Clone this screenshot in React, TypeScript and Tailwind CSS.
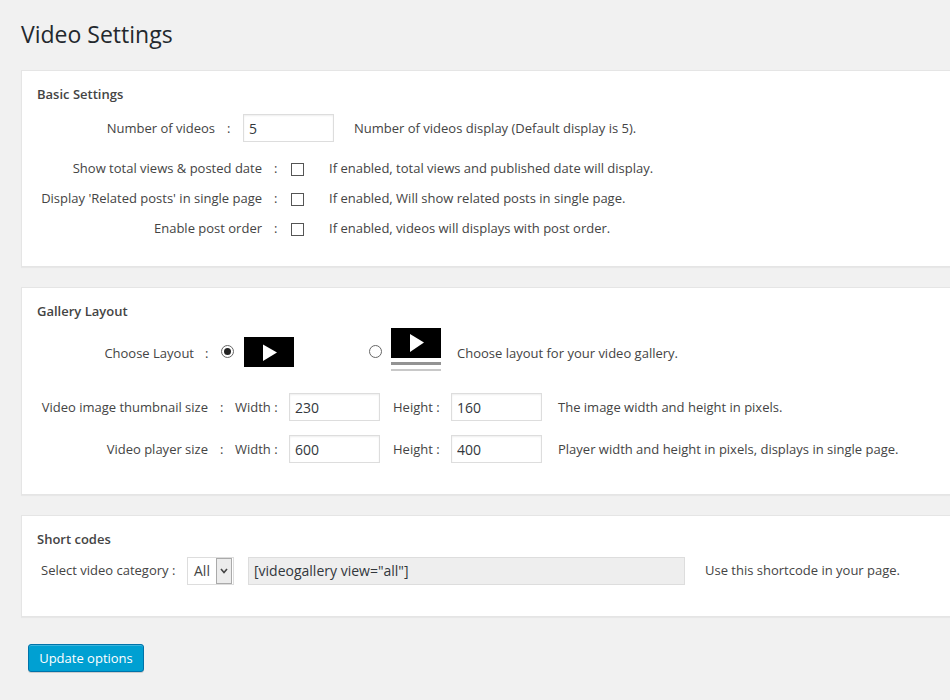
const inputCls =
  "h-[28px] w-[91px] border border-[#ddd] bg-white px-[5px] text-[14px] text-[#32373c] shadow-[inset_0_1px_2px_rgba(0,0,0,0.07)] outline-none";

function Check() {
  return <span className="mt-[2px] block h-[13px] w-[13px] border border-[#555] bg-white shrink-0" />;
}

function CheckRow({ label, desc }: { label: string; desc: string }) {
  return (
    <div className="flex h-[30px] items-center">
      <span className="w-[225px] text-right">{label}</span>
      <span className="ml-[12px] w-[16px]">:</span>
      <span className="ml-[1px]"><Check /></span>
      <span className="ml-[25px] whitespace-nowrap">{desc}</span>
    </div>
  );
}

function Thumb({ lines }: { lines?: boolean }) {
  return (
    <svg width="50" height={lines ? 44 : 30} viewBox={lines ? "0 0 50 44" : "0 0 50 30"} className="block">
      {lines ? (
        <>
          <rect width="50" height="30" fill="#000" />
          <path d="M19 6 L33 14.5 L19 24 Z" fill="#fff" />
          <rect y="34" width="50" height="3" fill="#939393" />
          <rect y="41" width="50" height="2" fill="#c8c8c8" />
        </>
      ) : (
        <>
          <rect width="50" height="30" fill="#000" />
          <path d="M19 7.5 L33 15.5 L19 24 Z" fill="#fff" />
        </>
      )}
    </svg>
  );
}

function SizeRow({ label, w, h, desc }: { label: string; w: string; h: string; desc: string }) {
  return (
    <div className="mt-[14px] flex h-[28px] items-center">
      <span className="w-[171px] text-right">{label}</span>
      <span className="ml-[12px] w-[15px]">:</span>
      <span className="w-[54px]">Width :</span>
      <input readOnly value={w} className={inputCls} />
      <span className="ml-[13px] w-[58px]">Height :</span>
      <input readOnly value={h} className={inputCls} />
      <span className="ml-[16px] whitespace-nowrap">{desc}</span>
    </div>
  );
}

function Card({ title, children, className }: { title: string; children: React.ReactNode; className: string }) {
  return (
    <section className={`ml-[21px] w-[960px] border border-[#e5e5e5] bg-white pl-[15px] shadow-[0_1px_1px_rgba(0,0,0,0.04)] ${className}`}>
      <h2 className="text-[13px] font-semibold leading-[18px] text-[#444]">{title}</h2>
      {children}
    </section>
  );
}

export default function App() {
  return (
    <div className="h-[700px] w-[950px] overflow-hidden bg-[#f1f1f1] text-[13px] leading-[18px] text-[#444] [font-family:'Open_Sans',sans-serif]">
      <h1 className="ml-[21px] pt-[19px] text-[23px] font-normal leading-[30px] text-[#23282d]">Video Settings</h1>

      <Card title="Basic Settings" className="mt-[21px] h-[197px] pt-[14px]">
        <div className="mt-[11px] flex h-[28px] items-center">
          <span className="w-[178px] text-right">Number of videos</span>
          <span className="ml-[12px] w-[16px]">:</span>
          <input readOnly value="5" className={inputCls} />
          <span className="ml-[20px] whitespace-nowrap">Number of videos display (Default display is 5).</span>
        </div>
        <div className="mt-[11px]">
          <CheckRow label="Show total views & posted date" desc="If enabled, total views and published date will display." />
          <CheckRow label="Display 'Related posts' in single page" desc="If enabled, Will show related posts in single page." />
          <CheckRow label="Enable post order" desc="If enabled, videos will displays with post order." />
        </div>
      </Card>

      <Card title="Gallery Layout" className="mt-[20px] h-[208px] pt-[14px]">
        <div className="mt-[8px] flex h-[44px] items-start">
          <span className="mt-[16px] w-[157px] text-right">Choose Layout</span>
          <span className="ml-[11px] mt-[16px] w-[16px]">:</span>
          <span className="mt-[17px] flex h-[13px] w-[13px] items-center justify-center rounded-full border border-[#666] bg-white">
            <span className="block h-[7px] w-[7px] rounded-full bg-[#222]" />
          </span>
          <span className="ml-[10px] mt-[9px]"><Thumb /></span>
          <span className="ml-[75px] mt-[17px] block h-[13px] w-[13px] rounded-full border border-[#666] bg-white" />
          <span className="ml-[9px]"><Thumb lines /></span>
          <span className="ml-[16px] mt-[16px] whitespace-nowrap">Choose layout for your video gallery.</span>
        </div>
        <div className="mt-[21px]">
          <SizeRow label="Video image thumbnail size" w="230" h="160" desc="The image width and height in pixels." />
          <SizeRow label="Video player size" w="600" h="400" desc="Player width and height in pixels, displays in single page." />
        </div>
      </Card>

      <Card title="Short codes" className="mt-[20px] h-[102px] pt-[14px]">
        <div className="mt-[9px] flex h-[28px] items-center pl-[4px]">
          <span className="-mt-[2px] w-[146px] whitespace-nowrap">Select video category :</span>
          <div className="flex h-[28px] w-[47px] items-center border border-[#ddd] bg-white pl-[6px] text-[14px]">
            <span className="w-[22px]">All</span>
            <span className="flex h-[26px] w-[16px] items-center justify-center border border-[#aaa] bg-[#ececec]">
              <svg width="8" height="6" viewBox="0 0 8 6"><path d="M1 1 L4 4.5 L7 1" fill="none" stroke="#444" strokeWidth="1.6" /></svg>
            </span>
          </div>
          <input
            readOnly
            value={'[videogallery view="all"]'}
            className="ml-[14px] h-[28px] w-[437px] border border-[#ddd] bg-[#eee] px-[5px] pb-[2px] text-[14px] text-[#32373c] outline-none"
          />
          <span className="ml-[20px] -mt-[2px] whitespace-nowrap">Use this shortcode in your page.</span>
        </div>
      </Card>

      <button className="ml-[28px] mt-[27px] block h-[28px] w-[116px] rounded-[3px] border border-[#0073aa] bg-[#00a0d2] text-[13px] leading-[26px] text-white shadow-[inset_0_1px_0_rgba(120,200,230,0.5),0_1px_0_rgba(0,0,0,0.15)]">
        Update options
      </button>
    </div>
  );
}
